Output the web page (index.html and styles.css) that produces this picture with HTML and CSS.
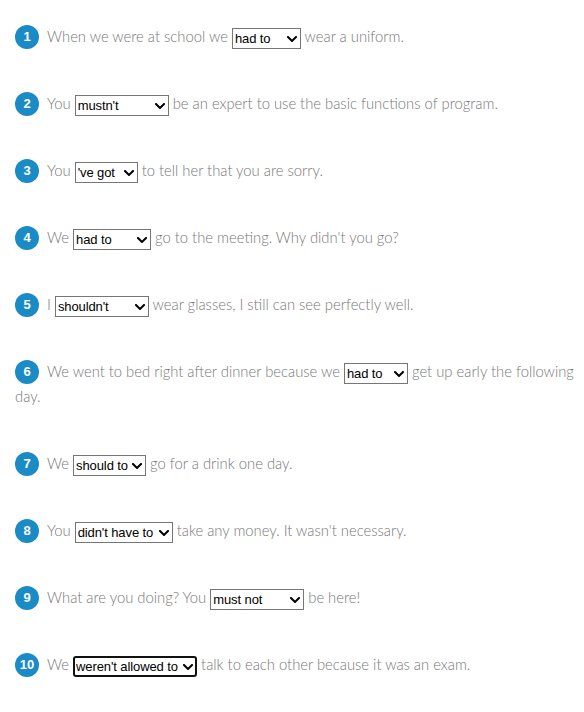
FILE: index.html
```html
<!DOCTYPE html>
<html>
<head>
<meta charset="utf-8">
<link rel="stylesheet" href="styles.css">
</head>
<body>
<div class="quiz">
  <p class="item"><span class="num">1</span>When we were at school we <span class="dd"><select class="sel w1"><option>had to</option></select><svg class="chev" viewBox="0 0 10 6"><path d="M1 1l4 4 4-4"/></svg></span> wear a uniform.</p>
  <p class="item"><span class="num">2</span>You <span class="dd"><select class="sel w2"><option>mustn't</option></select><svg class="chev" viewBox="0 0 10 6"><path d="M1 1l4 4 4-4"/></svg></span> be an expert to use the basic functions of program.</p>
  <p class="item"><span class="num">3</span>You <span class="dd"><select class="sel w3"><option>'ve got</option></select><svg class="chev" viewBox="0 0 10 6"><path d="M1 1l4 4 4-4"/></svg></span> to tell her that you are sorry.</p>
  <p class="item"><span class="num">4</span>We <span class="dd"><select class="sel w4"><option>had to</option></select><svg class="chev" viewBox="0 0 10 6"><path d="M1 1l4 4 4-4"/></svg></span> go to the meeting. Why didn't you go?</p>
  <p class="item"><span class="num">5</span>I <span class="dd"><select class="sel w5"><option>shouldn't</option></select><svg class="chev" viewBox="0 0 10 6"><path d="M1 1l4 4 4-4"/></svg></span> wear glasses, I still can see perfectly well.</p>
  <p class="item"><span class="num">6</span>We went to bed right after dinner because we <span class="dd"><select class="sel w6"><option>had to</option></select><svg class="chev" viewBox="0 0 10 6"><path d="M1 1l4 4 4-4"/></svg></span> get up early the following day.</p>
  <p class="item"><span class="num">7</span>We <span class="dd"><select class="sel w7"><option>should to</option></select><svg class="chev" viewBox="0 0 10 6"><path d="M1 1l4 4 4-4"/></svg></span> go for a drink one day.</p>
  <p class="item"><span class="num">8</span>You <span class="dd"><select class="sel w8"><option>didn't have to</option></select><svg class="chev" viewBox="0 0 10 6"><path d="M1 1l4 4 4-4"/></svg></span> take any money. It wasn't necessary.</p>
  <p class="item"><span class="num">9</span>What are you doing? You <span class="dd"><select class="sel w9"><option>must not</option></select><svg class="chev" viewBox="0 0 10 6"><path d="M1 1l4 4 4-4"/></svg></span> be here!</p>
  <p class="item"><span class="num">10</span>We <span class="dd"><select class="sel w10 focused"><option>weren't allowed to</option></select><svg class="chev" viewBox="0 0 10 6"><path d="M1 1l4 4 4-4"/></svg></span> talk to each other because it was an exam.</p>
</div>
</body>
</html>
```

FILE: styles.css
```css
html, body {
  margin: 0;
  padding: 0;
  background: #ffffff;
}
.quiz {
  padding: 24px 7px 0 15px;
  font-family: "Lato", "Open Sans", sans-serif;
  font-weight: 300;
  font-size: 14.8px;
  color: #777777;
}
.item {
  margin: 0 0 42px;
  line-height: 25px;
}
.num {
  display: inline-block;
  width: 24px;
  height: 24px;
  border-radius: 50%;
  background: #1b8bc6;
  color: #ffffff;
  font-family: "Liberation Sans", Arial, sans-serif;
  font-weight: bold;
  font-size: 13px;
  line-height: 24px;
  text-align: center;
  vertical-align: middle;
  margin: -4px 8px -4px 0;
  position: relative;
  top: -1px;
}
.dd {
  position: relative;
  display: inline-block;
  vertical-align: middle;
  margin: -4px 0;
  line-height: 0;
}
.sel {
  -webkit-appearance: none;
  appearance: none;
  box-sizing: border-box;
  font-family: "Liberation Sans", Arial, sans-serif;
  font-size: 13px;
  letter-spacing: -0.1px;
  color: #000;
  height: 21px;
  border: 1px solid #767676;
  border-radius: 0;
  background: #fff;
  padding: 0 12px 0 2px;
  margin: 0;
  outline: none;
}
.focused {
  border: 2px solid #111;
  border-radius: 3px;
  padding-left: 1px;
}
.chev {
  position: absolute;
  right: 4px;
  top: 8px;
  width: 10px;
  height: 6px;
  pointer-events: none;
}
.chev path {
  fill: none;
  stroke: #000;
  stroke-width: 2;
  stroke-linecap: square;
}
.w1 { width: 69px; }
.w2 { width: 94px; }
.w3 { width: 63px; }
.w4 { width: 78px; }
.w5 { width: 94px; }
.w6 { width: 64px; }
.w7 { width: 73px; }
.w8 { width: 98px; }
.w9 { width: 94px; }
.w10 { width: 124px; }
```
